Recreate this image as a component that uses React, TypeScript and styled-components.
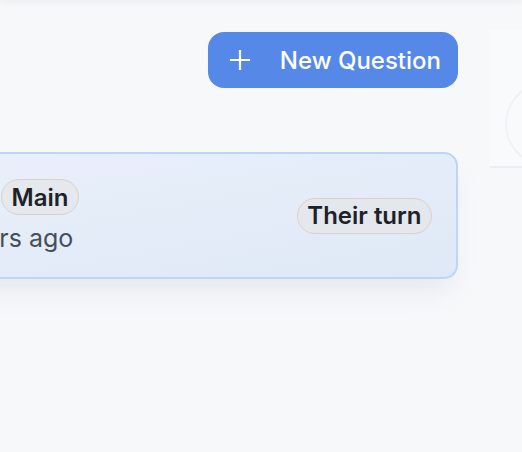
import styled, { createGlobalStyle } from "styled-components";

const GlobalStyle = createGlobalStyle`
  html, body {
    margin: 0;
    padding: 0;
    background: #f7f8fa;
    overflow: hidden;
  }
  body {
    font-family: Inter, "Noto Sans", "Liberation Sans", sans-serif;
    color: #1f2328;
  }
`;

const TopShadow = styled.div`
  height: 0;
  box-shadow: 0 0 6px 1px rgba(15, 23, 42, 0.12);
`;

const Page = styled.div`
  display: flex;
  height: 452px;
`;

const MainColumn = styled.div`
  flex: none;
  width: 658px;
  margin-left: -200px;
  padding-top: 32px;
  display: flex;
  flex-direction: column;
`;

const Toolbar = styled.div`
  display: flex;
  justify-content: flex-end;
  margin-bottom: 64px;
`;

const PrimaryButton = styled.button`
  display: flex;
  align-items: center;
  gap: 30px;
  height: 56px;
  padding: 0 17px 0 22px;
  border: none;
  border-radius: 16px;
  background: #5689e7;
  color: #ffffff;
  font-family: inherit;
  font-size: 24px;
  font-weight: 500;
  cursor: pointer;
`;

const QuestionCard = styled.div`
  display: flex;
  align-items: center;
  justify-content: space-between;
  height: 127px;
  box-sizing: border-box;
  padding: 0 24px 0 50px;
  border: 2px solid #bdd6f6;
  border-radius: 14px;
  background: linear-gradient(170deg, #eaf1fb 0%, #dfe8f6 100%);
  box-shadow: 0 18px 28px -8px rgba(148, 163, 184, 0.2);
`;

const CardInfo = styled.div`
  display: flex;
  flex-direction: column;
  gap: 9px;
`;

const TitleRow = styled.div`
  display: flex;
  align-items: center;
  gap: 10px;
`;

const Title = styled.span<{ $width: number }>`
  display: inline-block;
  width: ${(p) => p.$width}px;
  overflow: hidden;
  white-space: nowrap;
  text-overflow: ellipsis;
  font-size: 24px;
  font-weight: 600;
`;

const Badge = styled.span`
  display: inline-flex;
  align-items: center;
  height: 36px;
  box-sizing: border-box;
  padding: 0 9.5px;
  border: 1.5px solid #ddd0cb;
  border-radius: 999px;
  background: rgba(228, 230, 234, 0.85);
  color: #1d2229;
  font-size: 24px;
  font-weight: 600;
  white-space: nowrap;
`;

const Meta = styled.span`
  font-size: 25px;
  line-height: 28px;
  color: #474e5b;
  white-space: nowrap;
`;

const Sidebar = styled.div`
  flex: 1;
  margin-left: 32px;
  padding-top: 30px;
`;

const ProfilePanel = styled.div`
  position: relative;
  height: 136px;
  border-bottom: 2px solid #eceef2;
  background: #f9fafb;
  overflow: hidden;
`;

const AvatarRing = styled.div`
  position: absolute;
  left: 15px;
  top: 52px;
  width: 80px;
  height: 80px;
  border-radius: 50%;
  border: 2px solid #f1f2f5;
`;

const PlusIcon = () => (
  <svg width="20" height="20" viewBox="0 0 20 20" fill="none">
    <path d="M10 0v20M0 10h20" stroke="#ffffff" strokeWidth="2.2" />
  </svg>
);

const App = () => {
  return (
    <>
      <GlobalStyle />
      <TopShadow />
      <Page>
        <MainColumn>
          <Toolbar>
            <PrimaryButton>
              <PlusIcon />
              New Question
            </PrimaryButton>
          </Toolbar>
          <QuestionCard>
            <CardInfo>
              <TitleRow>
                <Title $width={139}>What made you smile today?</Title>
                <Badge>Main</Badge>
              </TitleRow>
              <Meta>Asked 2 hours ago</Meta>
            </CardInfo>
            <Badge>Their turn</Badge>
          </QuestionCard>
        </MainColumn>
        <Sidebar>
          <ProfilePanel>
            <AvatarRing />
          </ProfilePanel>
        </Sidebar>
      </Page>
    </>
  );
};

export default App;
